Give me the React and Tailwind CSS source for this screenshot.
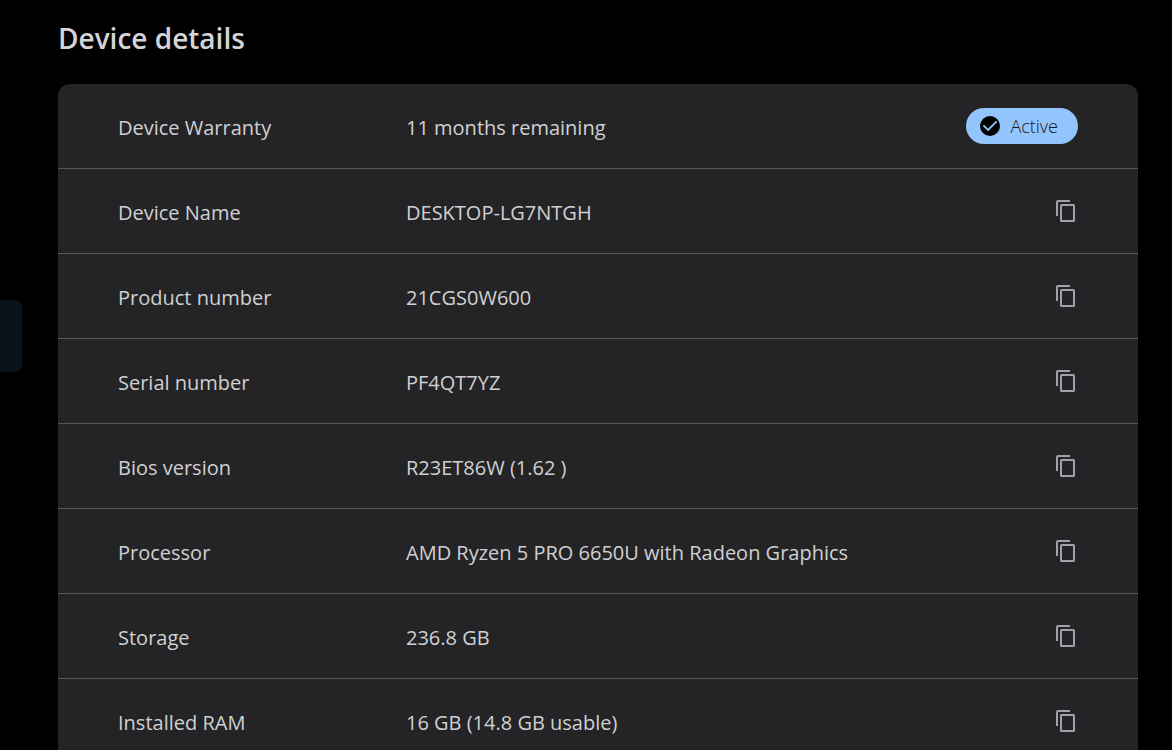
const details = [
  { label: "Device Name", value: "DESKTOP-LG7NTGH" },
  { label: "Product number", value: "21CGS0W600" },
  { label: "Serial number", value: "PF4QT7YZ" },
  { label: "Bios version", value: "R23ET86W (1.62 )" },
  { label: "Processor", value: "AMD Ryzen 5 PRO 6650U with Radeon Graphics" },
  { label: "Storage", value: "236.8 GB" },
  { label: "Installed RAM", value: "16 GB (14.8 GB usable)" },
];

function CopyIcon() {
  return (
    <svg viewBox="0 0 24 24" className="size-6" fill="none" stroke="currentColor" aria-hidden="true">
      <path d="M16 2H4a1 1 0 0 0-1 1v14" strokeWidth="2" />
      <rect x="7" y="6" width="13" height="16" rx="0.6" strokeWidth="2" />
    </svg>
  );
}

function CheckBadgeIcon() {
  return (
    <svg viewBox="0 0 24 24" className="size-6" aria-hidden="true">
      <circle cx="12" cy="12" r="10" fill="#000" />
      <path d="M5.4 11.3l4.7 4.6L18.7 7.3" fill="none" stroke="#93c5fd" strokeWidth="1.8" />
    </svg>
  );
}

function DetailRow({ label, value, children }) {
  return (
    <div className="flex h-[85px] items-center border-b border-[#55555b] px-[60px]">
      <dt className="w-72 shrink-0 pt-[3px]">{label}</dt>
      <dd className="flex min-w-0 grow items-center justify-between">
        <span className="pt-[3px]">{value}</span>
        {children}
      </dd>
    </div>
  );
}

export default function App() {
  return (
    <div className="flex h-screen overflow-hidden bg-black font-['Open_Sans','Noto_Sans',sans-serif] text-[#d0d0d3]">
      <aside className="w-[22px] shrink-0 pt-[300px]">
        <div className="h-[72px] rounded-r-md bg-[#09111a]" />
      </aside>
      <main className="min-w-0 grow pr-[34px] pl-9">
        <h1 className="pt-[18px] pb-[26px] text-[28px] leading-10 font-semibold text-[#d4d4d8]">Device details</h1>
        <dl className="rounded-xl bg-[#242426] text-xl">
          <DetailRow label="Device Warranty" value="11 months remaining">
            <span className="flex h-9 items-center gap-2 rounded-full bg-[#93c5fd] pr-5 pl-3 text-lg font-light text-[#18181b]">
              <CheckBadgeIcon />
              Active
            </span>
          </DetailRow>
          {details.map(({ label, value }) => (
            <DetailRow key={label} label={label} value={value}>
              <button type="button" aria-label={`Copy ${label}`} className="text-[#a1a1aa]">
                <CopyIcon />
              </button>
            </DetailRow>
          ))}
        </dl>
      </main>
    </div>
  );
}
